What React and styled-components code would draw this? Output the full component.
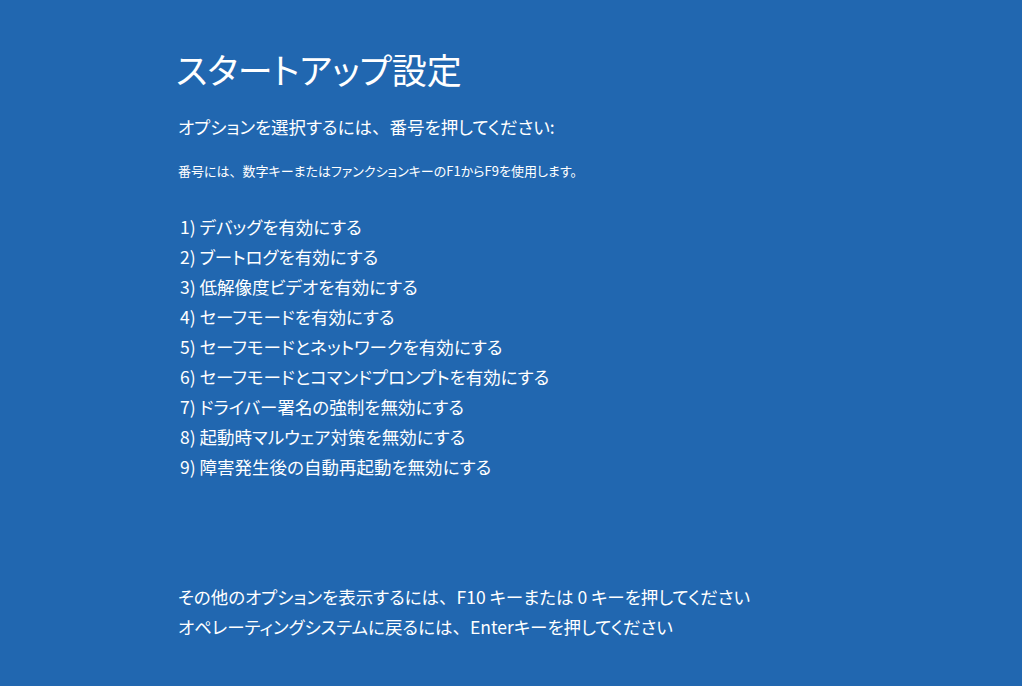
import styled, { createGlobalStyle } from "styled-components"

const Global = createGlobalStyle`
    html, body {
        margin: 0;
        padding: 0;
        height: 100%;
        background: #2167b0;
    }
    #root {
        height: 100%;
    }
`;

const Screen = styled.main`
    box-sizing: border-box;
    height: 100vh;
    padding: 44px 0 0 176px;
    background: #2167b0;
    color: #ffffff;
    font-family: "Noto Sans CJK JP", "Noto Sans", sans-serif;
    font-feature-settings: "palt";
    display: flex;
    flex-direction: column;
`;

const Title = styled.h1`
    margin: 0;
    font-size: 35px;
    font-weight: 400;
    line-height: 50px;
`;

const Prompt = styled.p`
    margin: 18px 0 0 2px;
    font-size: 17.5px;
    line-height: 30px;
`;

const Note = styled.p`
    margin: 20px 0 0 2px;
    font-size: 13px;
    line-height: 18px;
`;

// full-width ideographic comma, as on the Windows recovery screen
const Comma = styled.span`
    font-feature-settings: normal;
`;

const OptionList = styled.ol`
    list-style: none;
    margin: 32px 0 0 4px;
    padding: 0;
    display: flex;
    flex-direction: column;
`;

const Option = styled.li`
    font-size: 17.5px;
    line-height: 30px;
`;

const Footer = styled.div`
    margin: 100px 0 0 2px;
    display: flex;
    flex-direction: column;
`;

const FooterLine = styled.p`
    margin: 0;
    font-size: 17.5px;
    line-height: 30px;
`;

const options = [
    "デバッグを有効にする",
    "ブートログを有効にする",
    "低解像度ビデオを有効にする",
    "セーフモードを有効にする",
    "セーフモードとネットワークを有効にする",
    "セーフモードとコマンドプロンプトを有効にする",
    "ドライバー署名の強制を無効にする",
    "起動時マルウェア対策を無効にする",
    "障害発生後の自動再起動を無効にする",
]

export default function App() {
    return (
        <>
            <Global />
            <Screen>
                <Title>スタートアップ設定</Title>
                <Prompt>オプションを選択するには<Comma>、</Comma>番号を押してください:</Prompt>
                <Note>番号には<Comma>、</Comma>数字キーまたはファンクションキーのF1からF9を使用します。</Note>
                <OptionList>
                    {options.map((text, i) => (
                        <Option key={i}>{i + 1}) {text}</Option>
                    ))}
                </OptionList>
                <Footer>
                    <FooterLine>その他のオプションを表示するには<Comma>、</Comma>F10 キーまたは 0 キーを押してください</FooterLine>
                    <FooterLine>オペレーティングシステムに戻るには<Comma>、</Comma>Enterキーを押してください</FooterLine>
                </Footer>
            </Screen>
        </>
    )
}
